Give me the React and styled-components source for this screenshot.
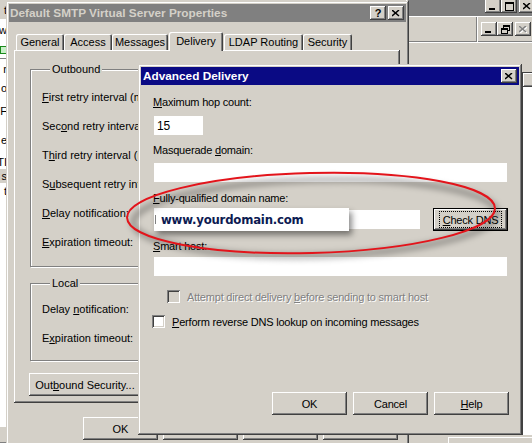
import React from "react";
import styled, { createGlobalStyle } from "styled-components";

const FACE = "#d4d0c8";

const GlobalStyle = createGlobalStyle`
  html, body { margin: 0; padding: 0; background: ${FACE}; }
  body {
    font-family: "Liberation Sans", Arial, sans-serif;
    font-size: 11px;
    color: #000;
  }
  * { box-sizing: border-box; }
`;

const raised = `
  background: ${FACE};
  box-shadow: inset -1px -1px #404040, inset 1px 1px #fff,
    inset -2px -2px #808080, inset 2px 2px ${FACE};
`;

const frame = `
  background: ${FACE};
  box-shadow: inset -1px -1px #404040, inset 1px 1px ${FACE},
    inset -2px -2px #808080, inset 2px 2px #fff;
`;

const Desktop = styled.div`
  position: relative;
  width: 532px;
  height: 443px;
  overflow: hidden;
  background: ${FACE};
`;

/* ---------- window chrome ---------- */

const Window = styled.div`
  position: absolute;
  left: ${(p) => p.$x}px;
  top: ${(p) => p.$y}px;
  width: ${(p) => p.$w}px;
  height: ${(p) => p.$h}px;
  padding: 3px;
  display: flex;
  flex-direction: column;
  z-index: ${(p) => p.$z || 1};
  ${frame}
`;

const TitleBar = styled.div`
  height: 18px;
  flex: none;
  display: flex;
  align-items: center;
  padding: 0 2px 0 ${(p) => p.$pl ?? 2}px;
  background: ${(p) => (p.$active ? "#0a0a84" : "#808080")};
  color: ${(p) => (p.$active ? "#fff" : FACE)};
  font-weight: bold;
  font-size: 11.8px;
  white-space: nowrap;
`;

const TitleText = styled.span`
  flex: 1;
  overflow: hidden;
`;

const CapButtons = styled.div`
  display: flex;
  gap: ${(p) => p.$gap ?? 2}px;
`;

const CapButton = styled.div`
  width: 16px;
  height: 14px;
  display: flex;
  align-items: center;
  justify-content: center;
  color: #000;
  font-size: 11px;
  font-weight: bold;
  ${raised}
`;

const XGlyph = ({ disabled }) => (
  <svg width="8" height="7" viewBox="0 0 8 7">
    {disabled && (
      <path d="M1 1 L8 7 M8 1 L1 7" stroke="#fff" strokeWidth="1.5" />
    )}
    <path
      d="M0 0 L7 6 M7 0 L0 6"
      stroke={disabled ? "#808080" : "#000"}
      strokeWidth="1.5"
    />
  </svg>
);

const MinGlyph = () => (
  <svg width="8" height="8" viewBox="0 0 8 8">
    <rect x="0" y="6" width="6" height="2" fill="#000" />
  </svg>
);

const MaxGlyph = () => (
  <svg width="9" height="9" viewBox="0 0 9 9">
    <rect x="0.5" y="0.5" width="8" height="8" fill="none" stroke="#000" />
    <rect x="0" y="1" width="9" height="1" fill="#000" />
  </svg>
);

const RestoreGlyph = () => (
  <svg width="9" height="9" viewBox="0 0 9 9">
    <rect x="2.5" y="0.5" width="6" height="5" fill="none" stroke="#000" />
    <rect x="2" y="1" width="7" height="1" fill="#000" />
    <rect x="0.5" y="3.5" width="6" height="5" fill={FACE} stroke="#000" />
    <rect x="0" y="4" width="7" height="1" fill="#000" />
  </svg>
);

/* ---------- generic controls ---------- */

const U = styled.span`
  text-decoration: underline;
  text-underline-offset: 1px;
`;

const Button = styled.div`
  width: ${(p) => p.$w || 75}px;
  height: 23px;
  flex: none;
  display: flex;
  align-items: center;
  justify-content: center;
  white-space: nowrap;
  ${raised}
`;

const DefaultButton = styled(Button)`
  box-shadow: inset 0 0 0 1px #000, inset -2px -2px #404040,
    inset 2px 2px #fff, inset -3px -3px #808080;
`;

const FocusRect = styled.span`
  display: flex;
  align-items: center;
  justify-content: center;
  height: 15px;
  padding: 0 3px;
  outline: 1px dotted #000;
`;

const TextField = styled.div`
  width: ${(p) => p.$w}px;
  height: 19px;
  flex: none;
  margin-left: 1px;
  background: #fff;
  display: flex;
  align-items: center;
  padding-left: 3px;
  font-size: 12px;
`;

const Label = styled.div`
  height: 13px;
  line-height: 13px;
  margin-top: ${(p) => p.$mt || 0}px;
  white-space: nowrap;
`;

const CheckRow = styled.div`
  display: flex;
  align-items: center;
  gap: 7px;
  margin-top: ${(p) => p.$mt}px;
  margin-left: ${(p) => p.$ml || 0}px;
  color: ${(p) => (p.$disabled ? "#808080" : "#000")};
  text-shadow: ${(p) => (p.$disabled ? "1px 1px #fff" : "none")};
  white-space: nowrap;
`;

const CheckBox = styled.span`
  width: 13px;
  height: 13px;
  flex: none;
  background: ${(p) => (p.$disabled ? FACE : "#fff")};
  box-shadow: inset 1px 1px #808080, inset -1px -1px #fff,
    inset 2px 2px #404040, inset -2px -2px ${FACE};
`;

/* ---------- left background window ---------- */

const LeftStrip = styled.div`
  position: absolute;
  left: 0;
  top: 0;
  width: 7px;
  height: 443px;
  background: #fff;
  display: flex;
  flex-direction: column;
  overflow: hidden;
  font-size: 11px;
`;

const StripCell = styled.div`
  height: ${(p) => p.$h}px;
  flex: none;
  display: flex;
  align-items: center;
  justify-content: flex-end;
  background: ${(p) => p.$bg || "transparent"};
  border-bottom: ${(p) => (p.$line ? "1px solid #808080" : "none")};
  overflow: hidden;
  white-space: nowrap;
`;

const StripIcon = styled.span`
  width: 7px;
  height: 8px;
  border: 1px solid #1a8a1a;
  background: #c8f0c8;
`;

/* ---------- right background window ---------- */

const BackTitle = styled.div`
  height: 20px;
  flex: none;
  background: #808080;
  display: flex;
  justify-content: flex-end;
  align-items: flex-end;
  padding: 0 0 3px;
`;

const BackMenu = styled.div`
  height: 26px;
  flex: none;
  display: flex;
  align-items: center;
  justify-content: flex-end;
  padding-right: 4px;
  border-top: 1px solid #fff;
  border-bottom: 1px solid #808080;
  box-shadow: 0 1px #fff;
`;

const MenuSep = styled.div`
  width: 2px;
  height: 25px;
  align-self: flex-start;
  margin-right: 3px;
  border-left: 1px solid #808080;
  border-right: 1px solid #fff;
`;

const BackBody = styled.div`
  flex: 1;
  display: flex;
  flex-direction: column;
  padding: 30px 0 0 114px;
`;

const ListPane = styled.div`
  flex: 1;
  display: flex;
  flex-direction: column;
  border-left: 1px solid #404040;
  border-top: 1px solid #404040;
`;

const ListHeader = styled.div`
  height: 14px;
  ${raised}
`;

const ListBody = styled.div`
  flex: 1;
  background: #fff;
`;

const BackFooter = styled.div`
  height: 16px;
  flex: none;
  margin: 2px 0 0 -74px;
  border-top: 1px solid #fff;
  border-left: 1px solid #fff;
`;

/* ---------- properties dialog ---------- */

const DialogBody = styled.div`
  flex: 1;
  display: flex;
  flex-direction: column;
  padding: 10px 6px 0 5px;
`;

const TabRow = styled.div`
  height: 18px;
  display: flex;
  align-items: flex-end;
  padding-left: 2px;
  position: relative;
  z-index: 2;
`;

const Tab = styled.div`
  width: ${(p) => p.$w}px;
  height: ${(p) => (p.$sel ? 19 : 16)}px;
  margin: ${(p) => (p.$sel ? "0 1px -1px" : "0")};
  padding-top: ${(p) => (p.$sel ? 3 : 2)}px;
  text-align: center;
  white-space: nowrap;
  background: ${FACE};
  border-top-left-radius: 2px;
  border-top-right-radius: 2px;
  box-shadow: inset 1px 1px #fff, inset -1px 0 #404040, inset -2px 0 #808080;
`;

const TabPanel = styled.div`
  height: 353px;
  flex: none;
  display: flex;
  flex-direction: column;
  padding: 0 16px;
  box-shadow: inset -1px -1px #404040, inset 1px 1px #fff,
    inset -2px -2px #808080;
`;

const Group = styled.fieldset`
  margin: ${(p) => p.$mt}px 0 0;
  padding: ${(p) => p.$pt}px 12px ${(p) => p.$pb}px 11px;
  border: 1px solid #808080;
  box-shadow: inset 1px 1px #fff, 1px 1px #fff;
  min-width: 0;
`;

const Legend = styled.legend`
  padding: 0 2px;
  margin-left: 8px;
  background: ${FACE};
  line-height: 13px;
`;

const GroupRow = styled.div`
  height: 29px;
  display: flex;
  align-items: center;
  white-space: nowrap;
`;

const PanelButton = styled(Button)`
  margin: 12px 0 0 -1px;
`;

const ButtonRow = styled.div`
  display: flex;
  justify-content: flex-end;
  gap: ${(p) => p.$gap}px;
  margin-top: ${(p) => p.$mt || 0}px;
  padding-right: ${(p) => p.$pr}px;
`;

/* ---------- advanced delivery dialog ---------- */

const Form = styled.div`
  flex: 1;
  display: flex;
  flex-direction: column;
  padding: 0 10px 17px 12px;
  letter-spacing: -0.2px;
`;

const FieldRow = styled.div`
  display: flex;
  align-items: center;
  margin-top: ${(p) => p.$mt}px;
`;

const FieldWrap = styled.div`
  position: relative;
  display: flex;
`;

const Callout = styled.div`
  position: absolute;
  left: 1px;
  top: -2px;
  width: 195px;
  height: 23px;
  background: #fff;
  display: flex;
  align-items: center;
  padding-left: 1px;
  box-shadow: 3px 4px 6px rgba(0, 0, 0, 0.45);
  font-family: "DejaVu Sans Condensed", "DejaVu Sans", Verdana, sans-serif;
  font-stretch: condensed;
  font-weight: bold;
  font-size: 13px;
  letter-spacing: -0.2px;
  color: #0d1b52;
`;

const Caret = styled.span`
  width: 1px;
  height: 9px;
  margin-right: 5px;
  background: #808080;
`;

const FormButtons = styled(ButtonRow)`
  margin-top: auto;
  padding-right: 0;
`;

const EllipseLayer = styled.svg`
  position: absolute;
  left: 0;
  top: 0;
  z-index: 5;
  pointer-events: none;
`;

const stripCells = [
  { h: 19, t: "t", bg: FACE },
  { h: 22, t: "w" },
  { h: 18, icon: true, line: true },
  { h: 20, t: "r" },
  { h: 18, t: "o" },
  { h: 28, t: "F" },
  { h: 30, t: "e" },
  { h: 14, t: "TI" },
  { h: 14, t: "s", bg: FACE },
  { h: 16, t: "t" },
  { h: 228, t: "" },
  { h: 16, t: "", bg: FACE, line: true },
];

export default function App() {
  return (
    <Desktop>
      <GlobalStyle />

      <LeftStrip>
        {stripCells.map((c, i) => (
          <StripCell key={i} $h={c.h} $bg={c.bg} $line={c.line}>
            {c.icon ? <StripIcon /> : c.t}
          </StripCell>
        ))}
      </LeftStrip>

      <Window $x={405} $y={-7} $w={130} $h={460} style={{ padding: "3px 0 0 3px" }}>
        <BackTitle>
          <CapButtons $gap={0}>
            <CapButton><MinGlyph /></CapButton>
            <CapButton><MaxGlyph /></CapButton>
            <CapButton style={{ marginLeft: 2 }}><XGlyph /></CapButton>
          </CapButtons>
        </BackTitle>
        <BackMenu>
          <MenuSep />
          <CapButtons $gap={0}>
            <CapButton><MinGlyph /></CapButton>
            <CapButton><RestoreGlyph /></CapButton>
            <CapButton style={{ marginLeft: 2 }}><XGlyph disabled /></CapButton>
          </CapButtons>
        </BackMenu>
        <BackBody>
          <ListPane>
            <ListHeader />
            <ListBody />
          </ListPane>
          <BackFooter />
        </BackBody>
      </Window>

      <Window $x={6} $y={1} $w={403} $h={470} $z={2}>
        <TitleBar $pl={1}>
          <TitleText>Default SMTP Virtual Server Properties</TitleText>
          <CapButtons>
            <CapButton>?</CapButton>
            <CapButton><XGlyph /></CapButton>
          </CapButtons>
        </TitleBar>
        <DialogBody>
          <TabRow>
            <Tab $w={48}>General</Tab>
            <Tab $w={48}>Access</Tab>
            <Tab $w={56}>Messages</Tab>
            <Tab $w={54} $sel>Delivery</Tab>
            <Tab $w={79}>LDAP Routing</Tab>
            <Tab $w={49}>Security</Tab>
          </TabRow>
          <TabPanel>
            <Group $mt={13} $pt={6} $pb={10}>
              <Legend>Outbound</Legend>
              <GroupRow><span><U>F</U>irst retry interval (minutes):</span></GroupRow>
              <GroupRow><span>Sec<U>o</U>nd retry interval (minutes):</span></GroupRow>
              <GroupRow><span>T<U>h</U>ird retry interval (minutes):</span></GroupRow>
              <GroupRow><span>S<U>u</U>bsequent retry interval (minutes):</span></GroupRow>
              <GroupRow><span><U>D</U>elay notification:</span></GroupRow>
              <GroupRow><span><U>E</U>xpiration timeout:</span></GroupRow>
            </Group>
            <Group $mt={10} $pt={4} $pb={8}>
              <Legend>Local</Legend>
              <GroupRow><span>Delay <U>n</U>otification:</span></GroupRow>
              <GroupRow><span>E<U>x</U>piration timeout:</span></GroupRow>
            </Group>
            <PanelButton $w={112}>
              <span>Out<U>b</U>ound Security...</span>
            </PanelButton>
          </TabPanel>
          <ButtonRow $gap={5} $mt={14} $pr={2}>
            <Button>OK</Button>
            <Button>Cancel</Button>
            <Button>Apply</Button>
            <Button>Help</Button>
          </ButtonRow>
        </DialogBody>
      </Window>

      <Window $x={138} $y={64} $w={384} $h={371} $z={3}>
        <TitleBar $active $pl={2}>
          <TitleText>Advanced Delivery</TitleText>
          <CapButtons>
            <CapButton><XGlyph /></CapButton>
          </CapButtons>
        </TitleBar>
        <Form>
          <Label $mt={11}><U>M</U>aximum hop count:</Label>
          <FieldRow $mt={7}>
            <TextField $w={49}>15</TextField>
          </FieldRow>
          <Label $mt={9}>Masquerade <U>d</U>omain:</Label>
          <FieldRow $mt={6}>
            <TextField $w={353} />
          </FieldRow>
          <Label $mt={10}><U>F</U>ully-qualified domain name:</Label>
          <FieldRow $mt={3}>
            <FieldWrap>
              <TextField $w={266} />
              <Callout>
                <Caret />
                <span>www.yourdomain.com</span>
              </Callout>
            </FieldWrap>
            <DefaultButton style={{ marginLeft: 13 }}>
              <FocusRect><U>C</U>heck DNS</FocusRect>
            </DefaultButton>
          </FieldRow>
          <Label $mt={9}><U>S</U>mart host:</Label>
          <FieldRow $mt={4}>
            <TextField $w={353} />
          </FieldRow>
          <CheckRow $mt={14} $ml={14} $disabled>
            <CheckBox $disabled />
            <span>Attempt direct delivery <U>b</U>efore sending to smart host</span>
          </CheckRow>
          <CheckRow $mt={12} $ml={-1}>
            <CheckBox />
            <span><U>P</U>erform reverse DNS lookup on incoming messages</span>
          </CheckRow>
          <FormButtons $gap={6}>
            <Button>OK</Button>
            <Button>Cancel</Button>
            <Button><span><U>H</U>elp</span></Button>
          </FormButtons>
        </Form>
      </Window>

      <EllipseLayer width="532" height="443" viewBox="0 0 532 443">
        <defs>
          <filter id="soft" x="-10%" y="-50%" width="120%" height="200%">
            <feGaussianBlur stdDeviation="3" />
          </filter>
        </defs>
        <g transform="rotate(-1.5 311 213)">
          <ellipse
            cx="315"
            cy="218"
            rx="182"
            ry="38"
            fill="none"
            stroke="rgba(0,0,0,0.35)"
            strokeWidth="5"
            filter="url(#soft)"
          />
          <ellipse
            cx="311"
            cy="213"
            rx="184"
            ry="40"
            fill="none"
            stroke="#e3141b"
            strokeWidth="2"
          />
        </g>
      </EllipseLayer>
    </Desktop>
  );
}
